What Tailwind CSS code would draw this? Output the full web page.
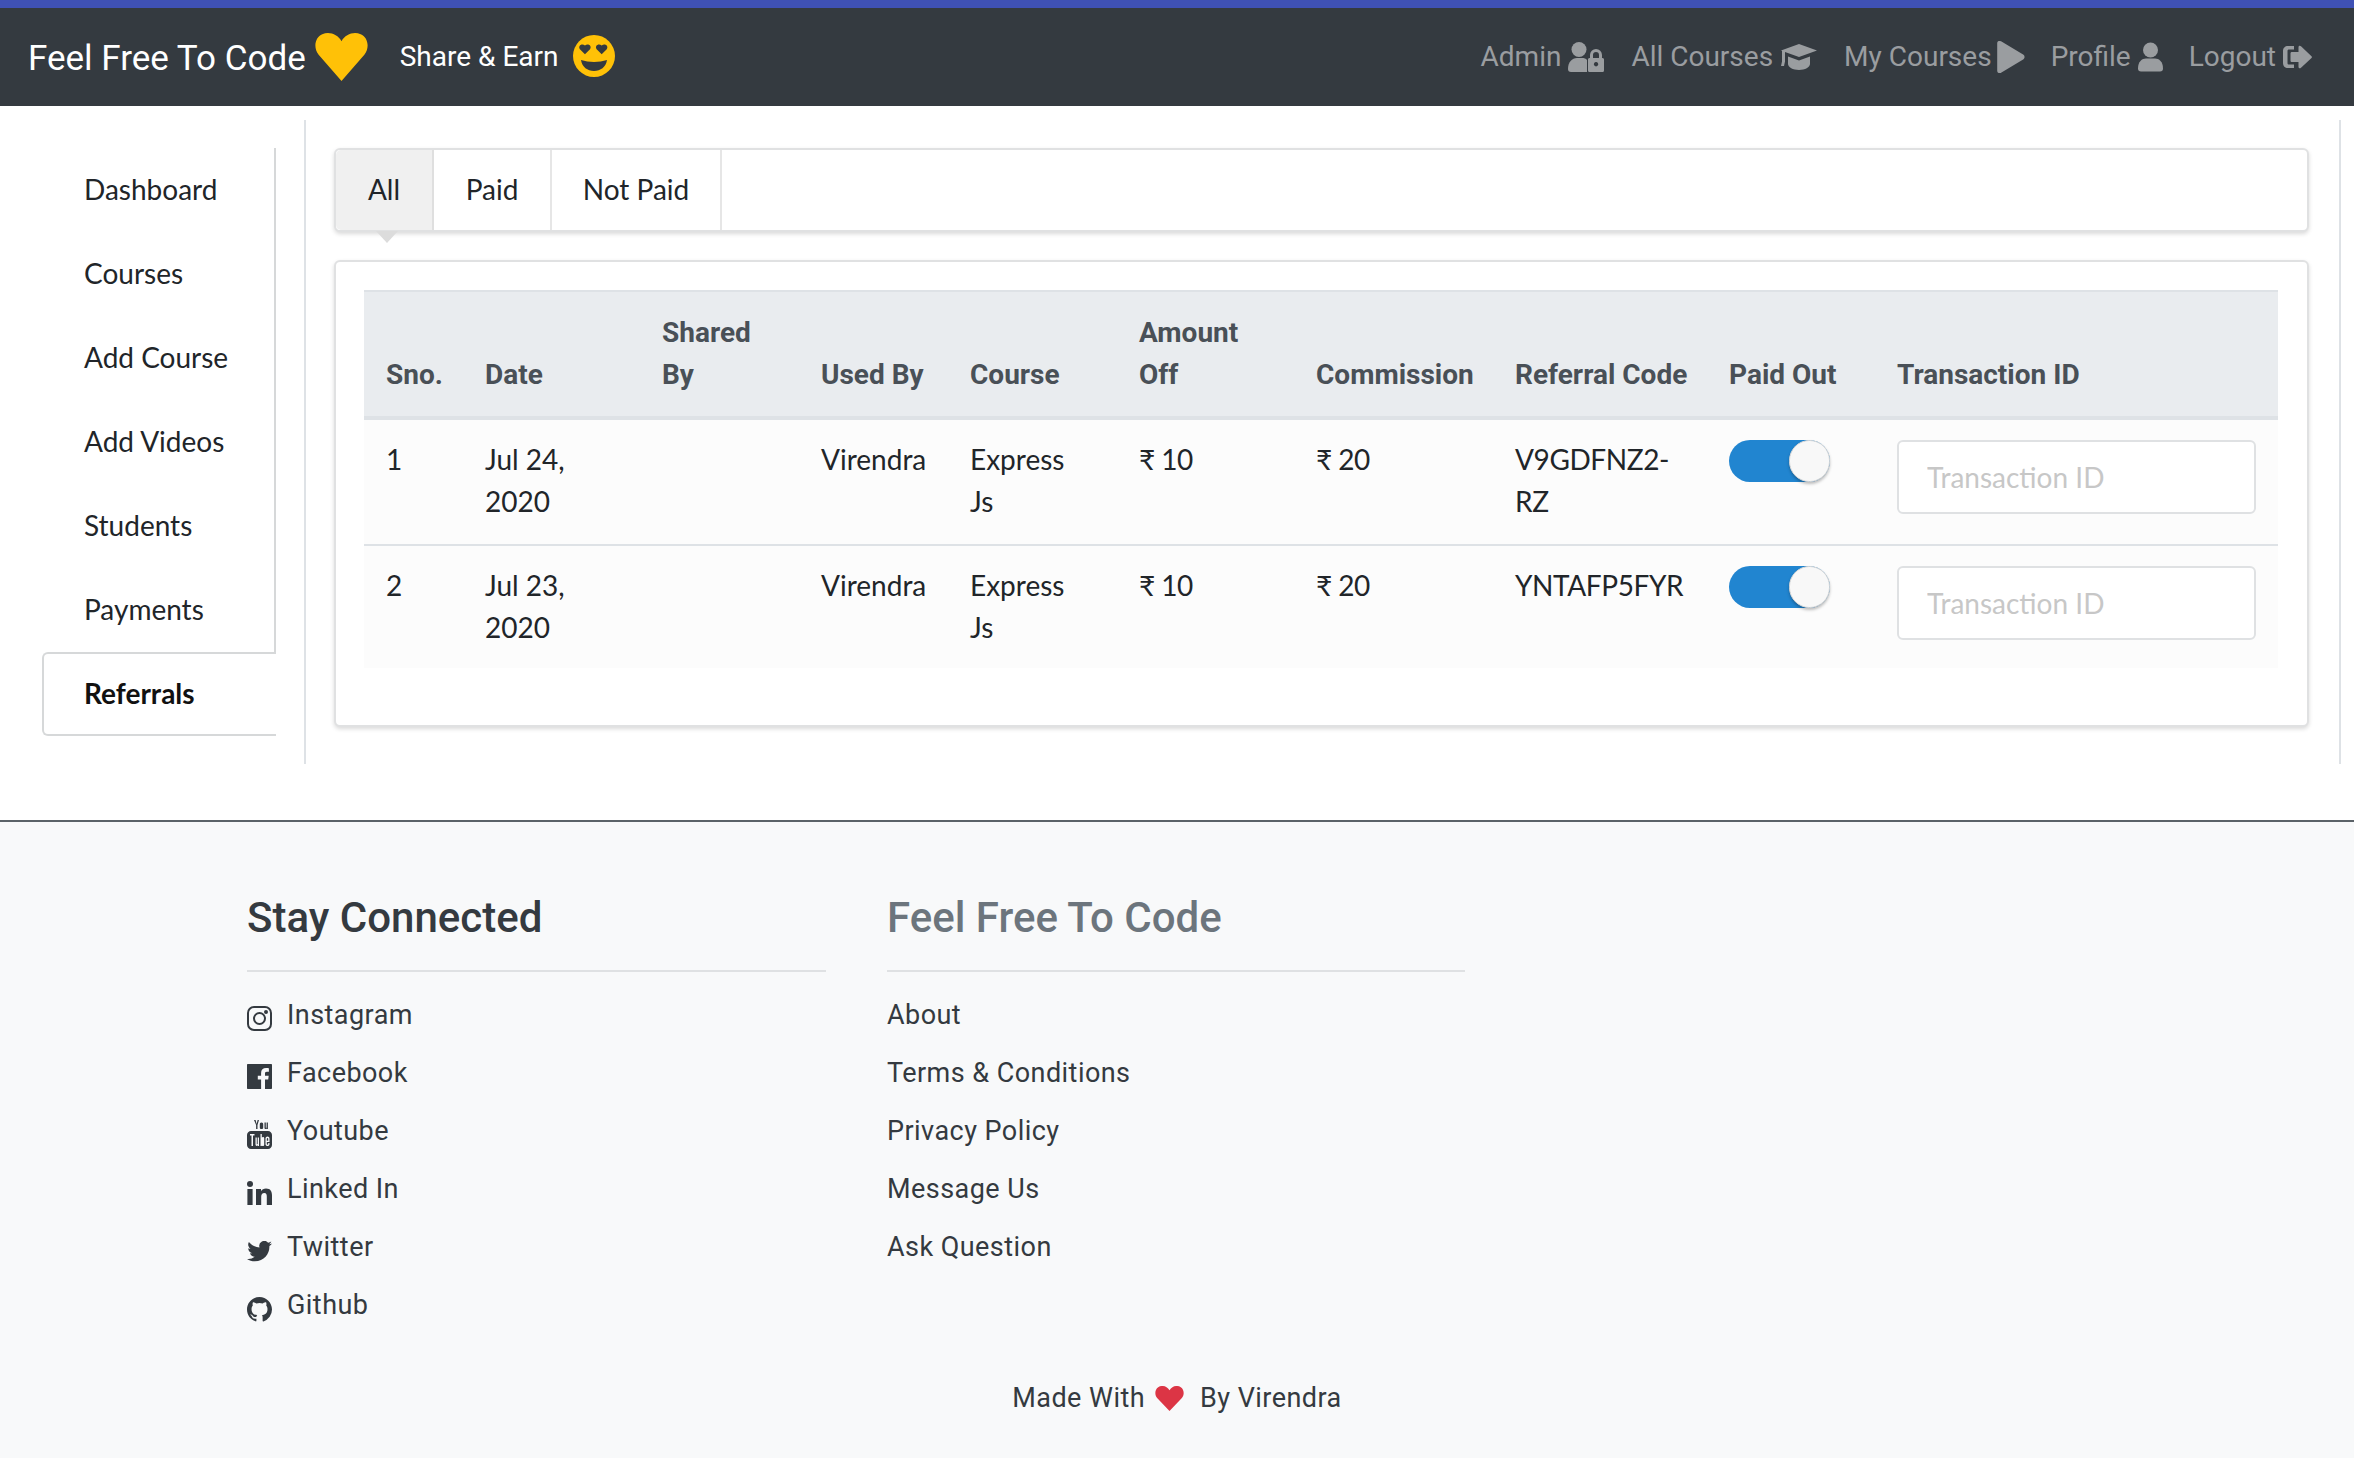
<!DOCTYPE html>
<html lang="en">
<head>
  <meta charset="UTF-8" />
  <title>Referrals - Feel Free To Code</title>
  <script src="https://cdn.jsdelivr.net/npm/@tailwindcss/browser@4"></script>
</head>
<body class="bg-white min-h-screen flex flex-col font-['Roboto',sans-serif] text-[#343a40]">

  <!-- navbar -->
  <header class="h-[106px] bg-[#343a40] border-t-8 border-[#3f51b5] flex items-center pl-[28px] pr-[42px]">
    <span class="text-[35px] text-white leading-none mt-[2px]">Feel Free To Code</span>
    <svg class="ml-[8px] w-[55px] h-[48px] text-[#ffc107]" viewBox="0 0 24 21" fill="currentColor"><path d="M12 21 2 9.500C-.6 6.300.6 1.600 3.600.5 6.800-.8 10.300.6 12 3.600 13.700.6 17.200-.8 20.400.5c3 1.100 4.200 5.800 1.600 9z"/></svg>
    <span class="ml-[31px] text-[28px] text-white leading-none">Share &amp; Earn</span>
    <svg class="ml-[14px] w-[42px] h-[42px] -mt-[3px] text-[#ffc107]" viewBox="0 0 42 42"><circle cx="21" cy="21" r="21" fill="currentColor"/><path d="M13 21 7.500 15.500C5 12 9.500 8.500 13 11.500 16.500 8.500 21 12 18.500 15.500z" fill="#343a40" transform="translate(0 0) scale(.92)"/><path d="M29 21 23.500 15.500C21 12 25.500 8.500 29 11.500 32.500 8.500 37 12 34.500 15.500z" fill="#343a40" transform="translate(2 0) scale(.92)"/><path d="M8 25c8 2.500 18 2.500 26 0-1 7-6.500 11-13 11S9 32 8 25z" fill="#343a40"/></svg>
    <nav class="ml-auto flex items-center text-[28px] text-[#9a9da0] leading-none">
      <span>Admin</span>
      <svg class="ml-[7px] w-[36px] h-[30px]" viewBox="0 0 36 30" fill="currentColor"><circle cx="11" cy="7.500" r="7.500"/><path d="M0 27c0-7 4-11 9-11h5c2 0 4 .5 5 2v12H3c-2 0-3-1-3-3z"/><path fill-rule="evenodd" d="M28 7a6 6 0 0 1 6 6v3h.5c1 0 1.500.8 1.500 1.800v10.400c0 1-.5 1.800-1.500 1.800h-13c-1 0-1.500-.8-1.500-1.800V17.800c0-1 .5-1.800 1.500-1.800h.5v-3a6 6 0 0 1 6-6zm0 3a3 3 0 0 0-3 3v3h6v-3a3 3 0 0 0-3-3zm0 10a2.200 2.200 0 1 0 .1 0z"/></svg>
      <span class="ml-[27px]">All Courses</span>
      <svg class="ml-[8px] w-[36px] h-[26px]" viewBox="0 0 36 26" fill="currentColor"><path d="M18 0 36 6.500 18 13 4 8v9.500L3 22H0l1-4.500V7L0 6.500z"/><path d="M7 12.500 18 16.500l11-4V20c0 3-5 6-11 6S7 23 7 20z"/></svg>
      <span class="ml-[27px]">My Courses</span>
      <svg class="ml-[5px] w-[28px] h-[32px]" viewBox="0 0 25 29" fill="currentColor"><path d="M0 2C0 0 2-.6 3.500.3l20 12c1.700 1 1.700 3.400 0 4.400l-20 12C2 29.600 0 29 0 27z"/></svg>
      <span class="ml-[26px]">Profile</span>
      <svg class="ml-[7px] w-[25px] h-[30px]" viewBox="0 0 25 29" fill="currentColor"><circle cx="12.500" cy="7.500" r="7.500"/><path d="M0 26c0-7 4-10 8-10h9c4 0 8 3 8 10 0 2-1 3-3 3H3c-2 0-3-1-3-3z"/></svg>
      <span class="ml-[26px]">Logout</span>
      <svg class="ml-[7px] w-[29px] h-[24px]" viewBox="0 0 29 24" fill="currentColor"><path d="M11 1v3.500H6C5 4.500 4.500 5 4.500 6v12c0 1 .5 1.500 1.500 1.500h5V23H5c-3 0-5-2-5-5V6c0-3 2-5 5-5z"/><path d="M16 1c.5-.6 1.300-.4 2 .2l10.500 10c.6.500.6 1.300 0 1.800L18 22.800c-.7.600-1.500.8-2 .2-.4-.3-.5-.8-.5-1.300V17H9c-1 0-1.500-.5-1.500-1.500v-7C7.500 7.500 8 7 9 7h6.500V2.300c0-.5.1-1 .5-1.300z"/></svg>
    </nav>
  </header>

  <main class="h-[714px] pt-[14px] flex items-start">
    <!-- sidebar -->
    <aside class="w-[306px] h-[644px] border-r-2 border-[#dee2e6] pt-[28px] font-['Lato',sans-serif] text-[28px] text-[#212529]">
      <ul class="w-[276px] flex flex-col">
        <li class="h-[84px] pl-[84px] pb-[2px] flex items-center border-r-2 border-[#d6d8d9]">Dashboard</li>
        <li class="h-[84px] pl-[84px] pb-[2px] flex items-center border-r-2 border-[#d6d8d9]">Courses</li>
        <li class="h-[84px] pl-[84px] pb-[2px] flex items-center border-r-2 border-[#d6d8d9]">Add Course</li>
        <li class="h-[84px] pl-[84px] pb-[2px] flex items-center border-r-2 border-[#d6d8d9]">Add Videos</li>
        <li class="h-[84px] pl-[84px] pb-[2px] flex items-center border-r-2 border-[#d6d8d9]">Students</li>
        <li class="h-[84px] pl-[84px] pb-[2px] flex items-center border-r-2 border-[#d6d8d9]">Payments</li>
        <li class="ml-[42px] h-[84px] pl-[40px] pb-[2px] flex items-center font-bold text-[#111] border-2 border-r-0 border-[#d6d8d9] rounded-l-[6px]">Referrals</li>
      </ul>
    </aside>

    <!-- content -->
    <section class="w-[2035px] h-[644px] border-r-2 border-[#dee2e6] pt-[28px] pl-[28px] pr-[30px] font-['Lato',sans-serif] text-[28px] leading-[42px] text-[#212529]">
      <div class="relative h-[84px] flex bg-white border-2 border-[#e0e1e2] rounded-[6px] shadow-[0_2px_4px_rgba(0,0,0,0.15)]">
        <div class="w-[98px] pb-[2px] flex items-center justify-center bg-[#f0f0f0] border-r-2 border-[#dfdfdf] rounded-l-[5px]">All</div>
        <div class="w-[118px] pb-[2px] flex items-center justify-center border-r-2 border-[#e6e6e6]">Paid</div>
        <div class="w-[170px] pb-[2px] flex items-center justify-center border-r-2 border-[#e6e6e6]">Not Paid</div>
        <div class="absolute left-[40px] top-[81px] w-0 h-0 border-l-[11px] border-r-[11px] border-t-[12px] border-l-transparent border-r-transparent border-t-[#dcdcdc]"></div>
      </div>

      <div class="mt-[28px] h-[467px] p-[28px] bg-white border-2 border-[#e0e1e2] rounded-[6px] shadow-[0_2px_4px_rgba(0,0,0,0.15)]">
        <table class="w-[1914px] table-fixed border-collapse">
          <colgroup>
            <col class="w-[100px]" /><col class="w-[177px]" /><col class="w-[159px]" /><col class="w-[149px]" /><col class="w-[169px]" /><col class="w-[177px]" /><col class="w-[199px]" /><col class="w-[214px]" /><col class="w-[168px]" /><col class="w-[402px]" />
          </colgroup>
          <thead class="bg-[#e9ecef] font-['Roboto',sans-serif] font-bold text-[#495057] text-[28px]">
            <tr class="h-[127px] border-b-4 border-[#dee2e6] border-t-2 align-bottom">
              <th class="text-left font-bold pl-[22px] pr-[20px] pb-[20px]">Sno.</th>
              <th class="text-left font-bold pl-[21px] pr-[20px] pb-[20px]">Date</th>
              <th class="text-left font-bold pl-[21px] pr-[20px] pb-[20px]">Shared By</th>
              <th class="text-left font-bold pl-[21px] pr-[10px] pb-[20px] whitespace-nowrap">Used By</th>
              <th class="text-left font-bold pl-[21px] pr-[20px] pb-[20px]">Course</th>
              <th class="text-left font-bold pl-[21px] pr-[20px] pb-[20px]">Amount Off</th>
              <th class="text-left font-bold pl-[21px] pr-[10px] pb-[20px]">Commission</th>
              <th class="text-left font-bold pl-[21px] pr-[10px] pb-[20px] whitespace-nowrap">Referral Code</th>
              <th class="text-left font-bold pl-[21px] pr-[10px] pb-[20px] whitespace-nowrap">Paid Out</th>
              <th class="text-left font-bold pl-[21px] pr-[20px] pb-[20px]">Transaction ID</th>
            </tr>
          </thead>
          <tbody class="bg-[#fcfcfc] align-top">
            <tr class="h-[127px] border-b-2 border-[#dee2e6]">
              <td class="pl-[22px] pr-[20px] pt-[18px] pb-[20px]">1</td>
              <td class="pl-[21px] pr-[20px] pt-[18px] pb-[20px]">Jul 24, 2020</td>
              <td class="pl-[21px] pr-[20px] pt-[18px] pb-[20px]"></td>
              <td class="pl-[21px] pr-[20px] pt-[18px] pb-[20px]">Virendra</td>
              <td class="pl-[21px] pr-[40px] pt-[18px] pb-[20px]">Express Js</td>
              <td class="pl-[21px] pr-[20px] pt-[18px] pb-[20px] whitespace-nowrap tracking-[-0.5px]">₹ 10</td>
              <td class="pl-[21px] pr-[20px] pt-[18px] pb-[20px] whitespace-nowrap tracking-[-0.5px]">₹ 20</td>
              <td class="pl-[21px] pr-[20px] pt-[18px] pb-[20px] tracking-[-0.4px]">V9GDFNZ2-RZ</td>
              <td class="pl-[21px] pt-[20px]">
                <div class="relative w-[101px] h-[42px] bg-[#2185d0] rounded-full">
                  <div class="absolute right-0 top-0 w-[41px] h-[42px] bg-[#f8f8f8] rounded-full border border-[#d8d8d8] shadow-[0_2px_3px_rgba(0,0,0,0.25)]"></div>
                </div>
              </td>
              <td class="pl-[21px] pt-[20px]">
                <input class="w-[359px] h-[74px] block bg-white border-2 border-[#dfe1e3] rounded-[6px] px-[28px] placeholder:text-[#c7c7c7]" placeholder="Transaction ID" />
              </td>
            </tr>
            <tr class="h-[123px]">
              <td class="pl-[22px] pr-[20px] pt-[18px] pb-[20px]">2</td>
              <td class="pl-[21px] pr-[20px] pt-[18px] pb-[20px]">Jul 23, 2020</td>
              <td class="pl-[21px] pr-[20px] pt-[18px] pb-[20px]"></td>
              <td class="pl-[21px] pr-[20px] pt-[18px] pb-[20px]">Virendra</td>
              <td class="pl-[21px] pr-[40px] pt-[18px] pb-[20px]">Express Js</td>
              <td class="pl-[21px] pr-[20px] pt-[18px] pb-[20px] whitespace-nowrap tracking-[-0.5px]">₹ 10</td>
              <td class="pl-[21px] pr-[20px] pt-[18px] pb-[20px] whitespace-nowrap tracking-[-0.5px]">₹ 20</td>
              <td class="pl-[21px] pr-[20px] pt-[18px] pb-[20px] tracking-[-0.4px]">YNTAFP5FYR</td>
              <td class="pl-[21px] pt-[20px]">
                <div class="relative w-[101px] h-[42px] bg-[#2185d0] rounded-full">
                  <div class="absolute right-0 top-0 w-[41px] h-[42px] bg-[#f8f8f8] rounded-full border border-[#d8d8d8] shadow-[0_2px_3px_rgba(0,0,0,0.25)]"></div>
                </div>
              </td>
              <td class="pl-[21px] pt-[20px]">
                <input class="w-[359px] h-[74px] block bg-white border-2 border-[#dfe1e3] rounded-[6px] px-[28px] placeholder:text-[#c7c7c7]" placeholder="Transaction ID" />
              </td>
            </tr>
          </tbody>
        </table>
      </div>
    </section>
  </main>

  <!-- footer -->
  <footer class="flex-1 bg-[#f8f9fa] border-t-2 border-[#5b6268] pt-[71px] pl-[247px] text-[27px] tracking-[0.45px]">
    <div class="flex gap-[61px]">
      <div class="w-[579px]">
        <h4 class="text-[42px] leading-[50px] font-medium text-[#343a40] tracking-normal">Stay Connected</h4>
        <div class="mt-[27px] border-t-2 border-[#dfe1e3] pt-[14px] flex flex-col">
          <a class="h-[58px] flex items-center gap-[15px]">
            <svg class="w-[25px] h-[25px] mt-[6px]" viewBox="0 0 25 25" fill="none" stroke="currentColor" stroke-width="2"><rect x="1" y="1" width="23" height="23" rx="6"/><circle cx="12.500" cy="12.500" r="5.500"/><circle cx="19" cy="6" r="1" fill="currentColor"/></svg>
            Instagram
          </a>
          <a class="h-[58px] flex items-center gap-[15px]">
            <svg class="w-[25px] h-[25px] mt-[6px]" viewBox="0 0 25 25" fill="currentColor"><path d="M1 0h23c.6 0 1 .4 1 1v23c0 .6-.4 1-1 1h-6v-9.500h3.200l.5-3.800H18V9.500c0-1.100.3-1.800 1.900-1.800h2V4.300c-.4 0-1.500-.2-2.900-.2-2.900 0-4.900 1.800-4.900 5v2.600h-3.300v3.800h3.300V25H1c-.6 0-1-.4-1-1V1c0-.6.4-1 1-1z"/></svg>
            Facebook
          </a>
          <a class="h-[58px] flex items-center gap-[15px]">
            <svg class="w-[25px] h-[29px] mt-[6px]" viewBox="0 0 25 29" fill="currentColor"><path d="M8 0h1.600l1 4 1-4H13l-1.500 5v4h-1.400V5zM15.500 2.500c1.200 0 1.700.8 1.700 1.700v3.200c0 1-.6 1.700-1.700 1.700s-1.700-.7-1.700-1.700V4.200c0-.9.5-1.700 1.700-1.700zm3 .1h1.300v5c0 .4.400.4.800 0v-5h1.300V9h-1.300v-.6c-1 1-2.100.9-2.100-.4z" transform="translate(-1 0)"/><path fill-rule="evenodd" d="M4 11h17c2.200 0 4 1.800 4 4v10c0 2.200-1.800 4-4 4H4c-2.200 0-4-1.800-4-4V15c0-2.200 1.800-4 4-4zm-1 3v1.500h1.500V26h1.500V15.500h1.500V14zm5.500 3.500V24.500c0 1.500 1.500 1.800 2.500.8v.7H12v-8.500h-1.300V24c-.4.4-.9.400-.9-.1v-6.400zM13.500 14v12h1.300v-.5c1 1 2.400.5 2.400-.8V18.300c0-1.300-1.400-1.800-2.400-.8V14zm5 4.500V24c0 2.700 4 2.700 4 0v-1h-1.300v1c0 1-1.400 1-1.400 0v-2h2.700v-3.500c0-2.700-4-2.700-4 0zm1.300.2c0-1 1.400-1 1.400 0v2h-1.400z"/></svg>
            Youtube
          </a>
          <a class="h-[58px] flex items-center gap-[15px]">
            <svg class="w-[25px] h-[24px] mt-[8px]" viewBox="0 0 25 24" fill="currentColor"><circle cx="3" cy="3" r="3"/><rect x=".4" y="8" width="5.200" height="16"/><path d="M9 8h5v2.200C15 8.600 16.800 7.600 19 7.600c4.500 0 6 2.800 6 7V24h-5.200v-8.300c0-2-.5-3.600-2.500-3.600s-3.100 1.500-3.100 3.600V24H9z"/></svg>
            Linked In
          </a>
          <a class="h-[58px] flex items-center gap-[15px]">
            <svg class="w-[25px] h-[21px] mt-[8px]" viewBox="0 0 25 21" fill="currentColor"><path d="M25 2.500c-.9.400-1.900.7-2.900.8 1-.6 1.800-1.600 2.200-2.800-1 .6-2 1-3.200 1.200A5 5 0 0 0 12.500 6.400C8.300 6.200 4.500 4.200 1.900 1c-1.400 2.300-.7 5.300 1.600 6.800-.8 0-1.600-.2-2.300-.6 0 2.400 1.700 4.500 4.100 5-.7.2-1.500.2-2.300.1.700 2 2.500 3.400 4.700 3.500A10 10 0 0 1 0 18c2.300 1.500 5 2.300 7.800 2.300 9.500 0 14.900-8 14.600-15.200 1-.7 1.900-1.600 2.600-2.600z"/></svg>
            Twitter
          </a>
          <a class="h-[58px] flex items-center gap-[15px]">
            <svg class="w-[25px] h-[25px] mt-[8px]" viewBox="0 0 16 16" fill="currentColor"><path d="M8 0C3.580 0 0 3.580 0 8c0 3.540 2.290 6.530 5.470 7.590.4.070.55-.17.55-.38v-1.340c-2.230.48-2.700-1.070-2.700-1.070-.36-.93-.89-1.170-.89-1.170-.73-.5.050-.49.050-.49.800.060 1.230.820 1.230.820.720 1.220 1.870.870 2.330.660.070-.520.280-.870.510-1.070-1.780-.2-3.640-.89-3.640-3.950 0-.870.310-1.590.820-2.150-.080-.200-.360-1.020.080-2.120 0 0 .670-.210 2.200.820a7.600 7.600 0 0 1 4 0c1.530-1.040 2.200-.820 2.200-.820.440 1.100.160 1.920.080 2.120.510.560.820 1.270.820 2.150 0 3.070-1.870 3.750-3.650 3.950.290.250.540.730.540 1.480v2.200c0 .210.150.460.550.380A8 8 0 0 0 16 8c0-4.420-3.580-8-8-8z"/></svg>
            Github
          </a>
        </div>
      </div>
      <div class="w-[578px]">
        <h4 class="text-[42px] leading-[50px] font-medium text-[#6c757d] tracking-normal">Feel Free To Code</h4>
        <div class="mt-[27px] border-t-2 border-[#dfe1e3] pt-[14px] flex flex-col">
          <a class="h-[58px] flex items-center">About</a>
          <a class="h-[58px] flex items-center">Terms &amp; Conditions</a>
          <a class="h-[58px] flex items-center">Privacy Policy</a>
          <a class="h-[58px] flex items-center">Message Us</a>
          <a class="h-[58px] flex items-center">Ask Question</a>
        </div>
      </div>
    </div>
    <div class="mt-[44px] -ml-[247px] flex items-center justify-center gap-[10px]">
      <span>Made With</span>
      <svg class="w-[29px] h-[25px] text-[#dc3545]" viewBox="0 0 24 21" fill="currentColor"><path d="M12 21 2 10.500C-.8 7.500-.4 3 2.500 1 5.600-1 9.800 0 12 3.500 14.200 0 18.400-1 21.500 1c2.900 2 3.300 6.500.5 9.500z"/></svg>
      <span class="ml-[6px]">By Virendra</span>
    </div>
  </footer>

</body>
</html>
